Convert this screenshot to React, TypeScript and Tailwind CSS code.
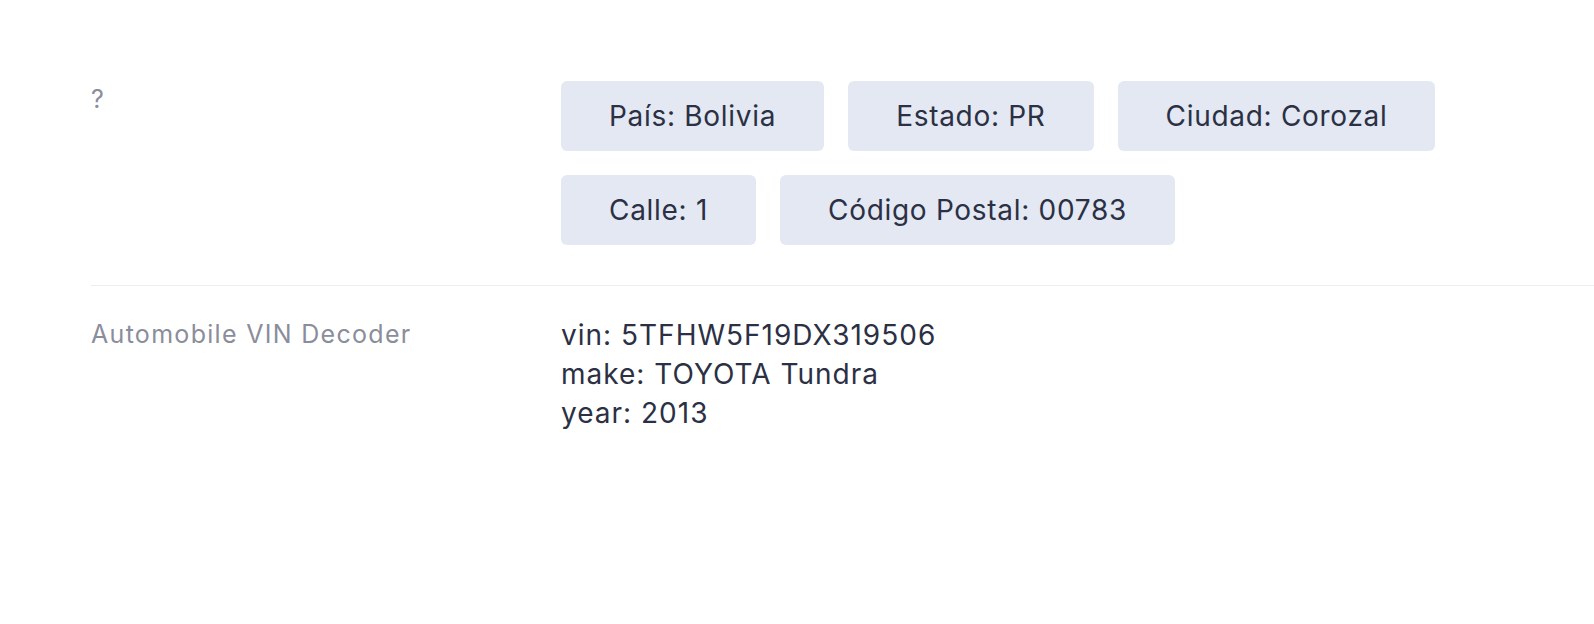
import React from 'react';

const address = [
  ['País', 'Bolivia'],
  ['Estado', 'PR'],
  ['Ciudad', 'Corozal'],
  ['Calle', '1'],
  ['Código Postal', '00783'],
];

const vin = [
  ['vin', '5TFHW5F19DX319506'],
  ['make', 'TOYOTA Tundra'],
  ['year', '2013'],
];

export default function App() {
  return (
    <div
      className="min-h-screen w-full bg-white text-[#2b3044]"
      style={{ fontFamily: 'Inter, Lato, sans-serif' }}
    >
      <div className="pt-[81px] pl-[91px]">
        {/* Address row */}
        <div className="flex pb-[40px] border-b border-[#ececf1]">
          <div className="w-[470px] shrink-0 pt-[2px] text-[25px] leading-[32px] tracking-[1.3px] text-[#8b8d9b]">?</div>
          <div className="flex flex-wrap gap-6 w-[900px]">
            {address.map(([k, v]) => (
              <div
                key={k}
                className="h-[70px] px-12 flex items-center rounded-md bg-[#e3e8f2] text-[28px] tracking-[0.7px]"
              >
                {k}: {v}
              </div>
            ))}
          </div>
        </div>

        {/* VIN row */}
        <div className="flex pt-[30px]">
          <div className="w-[470px] shrink-0 text-[25px] leading-[36px] tracking-[1.3px] text-[#8b8d9b]">
            Automobile VIN Decoder
          </div>
          <div className="text-[28px] leading-[39px] tracking-[1px]">
            {vin.map(([k, v]) => (
              <div key={k}>
                {k}: {v}
              </div>
            ))}
          </div>
        </div>
      </div>
    </div>
  );
}
